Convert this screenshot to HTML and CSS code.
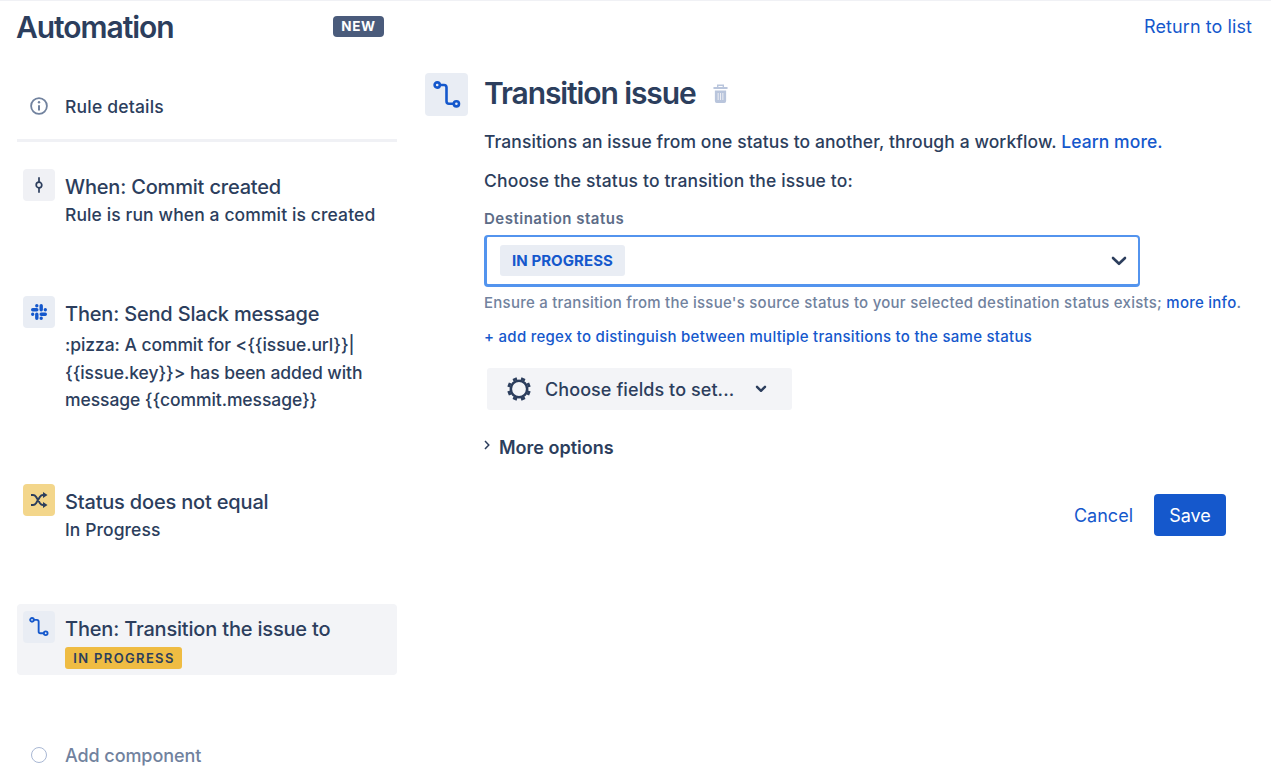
FILE: index.html
```html
<!DOCTYPE html>
<html lang="en">
<head>
<meta charset="utf-8">
<title>Automation</title>
<link rel="stylesheet" href="styles.css">
</head>
<body>
<svg class="defs" aria-hidden="true">
  <symbol id="transition" viewBox="0 0 28 28">
    <g fill="none" stroke="#1558cc" stroke-width="2.6">
      <circle cx="4.2" cy="4" r="2.6"/>
      <circle cx="23.4" cy="22.8" r="2.6"/>
      <path d="M6.8 4H11q2.500 0 2.500 2.500v13.800q0 2.500 2.500 2.500h4.800"/>
    </g>
  </symbol>
</svg>
<div class="page">
  <aside class="sidebar">
    <header class="brand">
      <h1 class="brand-title">Automation</h1>
      <span class="badge-new">NEW</span>
    </header>
    <div class="details">
      <svg class="info" viewBox="0 0 18 18" fill="none" stroke="#71829e"><circle cx="9" cy="9" r="7.9" stroke-width="1.8"/><circle cx="9" cy="5.3" r="1.2" fill="#71829e" stroke="none"/><path d="M9 8.2v5.2" stroke-width="2"/></svg>
      <span class="t-details">Rule details</span>
    </div>
    <section class="step step-commit">
      <span class="tile"><svg width="8" height="16" viewBox="0 0 8 16" fill="none" stroke="#2c3e5d" stroke-width="1.7"><circle cx="4" cy="8" r="2.8"/><path d="M4 .3v4.900M4 10.800v4.900"/></svg></span>
      <div class="body"><h2 class="name">When: Commit created</h2><p class="desc t-run">Rule is run when a commit is created</p></div>
    </section>
    <section class="step step-slack">
      <span class="tile tile-blue"><svg width="18" height="18" viewBox="0 0 18 18" fill="none" stroke="#1558cc" stroke-width="3.4" stroke-linecap="round"><path d="M6.8 6.8H2.7M11.2 6.8V2.7M11.2 11.2h4.1M6.8 11.2v4.1M6.8 2.7h.01M15.3 6.8h.01M11.2 15.3h.01M2.7 11.2h.01"/></svg></span>
      <div class="body"><h2 class="name">Then: Send Slack message</h2><p class="desc t-pizza">:pizza: A commit for &lt;{{issue.url}}|<br>{{issue.key}}&gt; has been added with<br>message {{commit.message}}</p></div>
    </section>
    <section class="step step-status">
      <span class="tile tile-yellow"><svg width="18" height="16" viewBox="0 0 18 16"><g fill="none" stroke="#2c3e5d" stroke-width="2"><path d="M1 3h2q1.800 0 3 1.800l4 6.400Q11.200 13 13 13h2M1 13h2q1.800 0 3-1.800l4-6.400Q11.200 3 13 3h2"/></g><path fill="#2c3e5d" d="M13 0 17.500 3l-4.500 3zM13 10l4.500 3-4.500 3z"/></svg></span>
      <div class="body"><h2 class="name">Status does not equal</h2><p class="desc">In Progress</p></div>
    </section>
    <section class="step step-active">
      <span class="tile tile-blue"><svg width="20" height="20"><use href="#transition"/></svg></span>
      <div class="body"><h2 class="name">Then: Transition the issue to</h2><span class="lozenge">IN PROGRESS</span></div>
    </section>
    <div class="add"><span class="ring"></span><span class="t-add">Add component</span></div>
  </aside>
  <main class="main">
    <nav class="top"><a class="t-return">Return to list</a></nav>
    <div class="editor">
      <span class="tile tile-blue tile-large"><svg width="28" height="28"><use href="#transition"/></svg></span>
      <div class="form">
        <div class="heading">
          <h2 class="title">Transition issue</h2>
          <svg class="trash" width="15" height="20" viewBox="0 0 16 20" preserveAspectRatio="none"><path fill="none" stroke="#b9c5dc" stroke-width="1.500" d="M5 3V1.300h6V3"/><path fill="#b9c5dc" d="M.5 3h15v2H.5zM2 6.500h12V17q0 2-2 2H4q-2 0-2-2z"/><path stroke="#f0f1f5" d="M5.500 9v7M8 9v7M10.500 9v7"/></svg>
        </div>
        <p class="line t-intro">Transitions an issue from one status to another, through a workflow. <a>Learn more.</a></p>
        <p class="line t-choose">Choose the status to transition the issue to:</p>
        <label class="label">Destination status</label>
        <div class="select"><span class="chip">IN PROGRESS</span><svg width="16" height="10" viewBox="0 0 16 10" fill="none" stroke="#2c3e5d" stroke-width="2.600" stroke-linecap="round" stroke-linejoin="round"><path d="m2 2 6 5.800L14 2"/></svg></div>
        <p class="hint">Ensure a transition from the issue's source status to your selected destination status exists; <a>more info</a>.</p>
        <a class="regex">+ add regex to distinguish between multiple transitions to the same status</a>
        <button class="fields">
          <svg width="24" height="24" viewBox="-12 -12 24 24"><circle r="8.200" fill="none" stroke="#2c3e5d" stroke-width="2.600"/><path stroke="#2c3e5d" stroke-width="4.200" d="M3.500-8.400 4.500-10.900M8.400-3.500 10.900-4.500M8.400 3.500 10.900 4.500M3.500 8.400 4.500 10.900M-3.500 8.400-4.500 10.900M-8.400 3.500-10.900 4.500M-8.400-3.500-10.900-4.500M-3.500-8.400-4.500-10.900"/></svg>
          <span class="t-fields">Choose fields to set...</span>
          <svg width="12" height="8" viewBox="0 0 12 8" fill="none" stroke="#2c3e5d" stroke-width="2.400" stroke-linecap="round" stroke-linejoin="round"><path d="m2 1.800 4 4 4-4"/></svg>
        </button>
        <div class="more"><svg width="6" height="10" viewBox="0 0 6 10" fill="none" stroke="#2c3e5d" stroke-width="1.500"><path d="m1 1 3.800 4L1 9"/></svg><span>More options</span></div>
        <footer class="actions"><a class="t-cancel">Cancel</a><button class="save">Save</button></footer>
      </div>
    </div>
  </main>
</div>
</body>
</html>
```
FILE: styles.css
```css
* { box-sizing: border-box; }
body { margin: 0; background: #fff; color: #2c3e5d; font-family: Inter, "Liberation Sans", sans-serif; font-size: 18px; }
h1, h2, p { margin: 0; font-weight: 500; }
a { color: #1558cc; }
button { border: 0; margin: 0; font: inherit; color: inherit; }
svg { display: block; flex: none; }
.defs { position: absolute; width: 0; height: 0; }
.page { display: flex; height: 780px; border-top: 1px solid #f0f1f5; overflow: hidden; white-space: nowrap; }
.sidebar { width: 397px; padding-left: 17px; flex: none; }
.brand { display: flex; justify-content: space-between; height: 51px; padding-right: 13px; align-items: center; }
.brand-title { font-size: 30px; font-weight: 600; letter-spacing: -1.050px; margin-left: -1px; }
.badge-new { width: 51px; height: 21px; border-radius: 4px; background: #4a5b7b; color: #fff; font-size: 13.500px; font-weight: 700; line-height: 21px; text-align: center; letter-spacing: 0.600px; }
.details { display: flex; align-items: center; height: 90px; padding: 21px 0 0 13px; margin-bottom: 27px; border-bottom: 3px solid #f0f1f5; gap: 17px; }
.info { width: 18px; height: 18px; }
.t-details { font-size: 17.500px; font-weight: 450; letter-spacing: 0.200px; }
.step { display: flex; gap: 10px; padding-left: 6px; }
.tile { width: 32px; height: 32px; border-radius: 4px; background: #f0f1f5; display: flex; align-items: center; justify-content: center; flex: none; }
.tile-blue { background: #e9edf4; }
.tile-yellow { background: #f3d68b; }
.name { font-size: 20px; line-height: 28px; font-weight: 450; letter-spacing: -0.180px; }
.desc { font-size: 17.500px; line-height: 28px; font-weight: 450; letter-spacing: 0.080px; }
.t-run { letter-spacing: 0.110px; }
.step-commit { height: 127px; }
.step-commit .body { padding-top: 4px; }
.step-slack { height: 188px; }
.step-slack .body { padding-top: 4px; }
.desc.t-pizza { padding-top: 3px; line-height: 27.500px; letter-spacing: -0.070px; }
.step-status { height: 120px; }
.step-status .body { padding-top: 4px; }
.step-active { height: 71px; background: #f3f4f7; border-radius: 4px; padding-top: 7px; }
.step-active .body { padding-top: 4px; }
.lozenge { display: block; width: 117px; height: 22px; margin-top: 4px; border-radius: 3px; background: #efbc43; font-size: 13px; font-weight: 600; line-height: 22px; text-align: center; letter-spacing: 1.350px; text-indent: 1px; }
.add { display: flex; align-items: center; height: 28px; margin-top: 66px; padding-left: 14px; gap: 18px; color: #71829e; }
.t-add { font-weight: 450; letter-spacing: -0.080px; }
.ring { width: 16px; height: 16px; border: 1px solid #a9b8d4; border-radius: 50%; }
.main { flex: 1; padding-left: 28px; }
.top { height: 72px; padding: 12px 19px 0 0; line-height: 28px; text-align: right; }
.t-return { letter-spacing: 0.080px; }
.editor { display: flex; gap: 16px; }
.tile-large { width: 43px; height: 43px; }
.form { width: 760px; display: flex; flex-direction: column; align-items: flex-start; }
.heading { display: flex; align-items: center; gap: 17px; height: 42px; }
.title { font-size: 30px; font-weight: 600; letter-spacing: -1.100px; margin-top: -2px; }
.line { font-size: 17.500px; font-weight: 450; line-height: 28px; }
.t-intro { margin-top: 13px; letter-spacing: 0.080px; }
.t-choose { margin-top: 11px; letter-spacing: 0.150px; }
.label { margin-top: 14px; font-size: 15px; line-height: 20px; font-weight: 600; color: #5c6c87; letter-spacing: 0.500px; }
.select { display: flex; align-items: center; justify-content: space-between; width: 656px; height: 52px; margin-top: 6px; padding: 0 11px 0 13px; border: solid #5394ee; border-width: 2px 2px 3px 3px; border-radius: 4px; }
.chip { width: 125px; height: 31px; background: #e9edf4; border-radius: 3px; color: #1558cc; font-size: 15px; line-height: 31px; font-weight: 700; text-align: center; letter-spacing: 0.080px; }
.hint { margin-top: 6px; font-size: 15px; line-height: 20px; color: #71829e; letter-spacing: 0.250px; }
.regex { margin-top: 14px; font-size: 15px; line-height: 20px; font-weight: 500; letter-spacing: 0.270px; }
.fields { display: flex; align-items: center; width: 305px; height: 42px; margin: 21px 0 0 3px; padding: 0 0 0 20px; background: #f3f4f7; border-radius: 3px; }
.t-fields { width: 196px; margin: 0 14px; text-align: left; font-weight: 500; letter-spacing: 0.080px; }
.more { display: flex; align-items: center; gap: 9px; height: 24px; margin-top: 25px; font-weight: 600; }
.more svg { margin-bottom: 4px; }
.actions { display: flex; align-items: center; gap: 21px; height: 42px; margin-top: 35px; align-self: stretch; justify-content: flex-end; padding-right: 18px; }
.save { width: 72px; height: 42px; background: #1558cc; border-radius: 4px; color: #fff; padding: 0; text-align: center; }
```
